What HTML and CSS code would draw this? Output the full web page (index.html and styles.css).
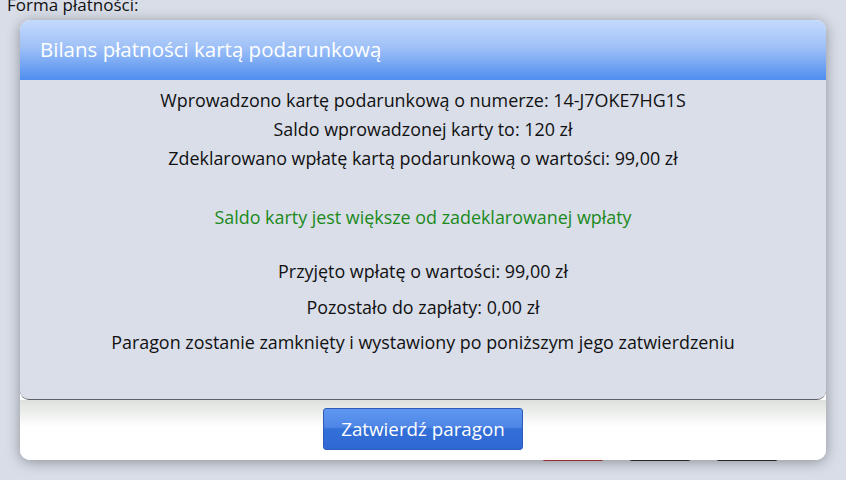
FILE: index.html
```html
<!DOCTYPE html>
<html lang="pl">
<head>
    <meta charset="UTF-8">
    <meta name="viewport" content="width=device-width, initial-scale=1.0">
    <title>Bilans płatności kartą podarunkową</title>
    <link rel="stylesheet" href="styles.css">
</head>
<body>
    <div class="page">
        <div class="label">Forma płatności:</div>
        <div class="pay-buttons">
            <span class="pay pay-red"></span>
            <span class="pay pay-dark"></span>
            <span class="pay pay-dark"></span>
        </div>
    </div>

    <!-- Modal -->
    <div class="modal">
        <div class="modal-header">Bilans płatności kartą podarunkową</div>
        <div class="modal-body">
            <p class="line">Wprowadzono kartę podarunkową o numerze: 14-J7OKE7HG1S</p>
            <p class="line">Saldo wprowadzonej karty to: 120 zł</p>
            <p class="line">Zdeklarowano wpłatę kartą podarunkową o wartości: 99,00 zł</p>
            <p class="line ok">Saldo karty jest większe od zadeklarowanej wpłaty</p>
            <p class="line summary first">Przyjęto wpłatę o wartości: 99,00 zł</p>
            <p class="line summary">Pozostało do zapłaty: 0,00 zł</p>
            <p class="line summary">Paragon zostanie zamknięty i wystawiony po poniższym jego zatwierdzeniu</p>
        </div>
        <div class="modal-footer">
            <button class="confirm">Zatwierdź paragon</button>
        </div>
    </div>
</body>
</html>
```

FILE: styles.css
```css
/* General styles */
body {
    margin: 0;
    padding: 0;
    background-color: #d8dde8;
    font-family: "Open Sans", "Noto Sans", sans-serif;
    color: #111;
    height: 480px;
    overflow: hidden;
}

.page {
    padding: 0 7px;
}

.label {
    font-size: 17px;
    line-height: 20px;
    margin-top: -5px;
}

.pay-buttons {
    display: flex;
    gap: 25px;
    margin-top: 436px;
    margin-left: 535px;
}

.pay {
    width: 62px;
    height: 10px;
    border-radius: 3px;
}

.pay-red {
    background-color: #b83a36;
}

.pay-dark {
    background-color: #333;
}

/* Modal */
.modal {
    position: absolute;
    left: 20px;
    top: 20px;
    width: 806px;
    height: 440px;
    border-radius: 10px;
    overflow: hidden;
    background-color: #fff;
    box-shadow: 0 2px 14px rgba(0, 0, 0, 0.35);
    display: flex;
    flex-direction: column;
}

.modal-header {
    height: 60px;
    padding-left: 20px;
    line-height: 58px;
    font-size: 20.5px;
    color: #fff;
    background: linear-gradient(to bottom, #c4dafd 0%, #9fc1f7 45%, #4f8ef0 100%);
}

.modal-body {
    height: 320px;
    box-sizing: border-box;
    padding-top: 6px;
    background-color: #d9dee9;
    border-bottom: 1px solid #5d6166;
    border-radius: 0 0 9px 9px;
    text-align: center;
}

.line {
    margin: 0;
    font-size: 17.9px;
    line-height: 29px;
}

.ok {
    color: #1a8a1a;
    margin-top: 30px;
}

.summary {
    margin-top: 6.5px;
}

.summary.first {
    margin-top: 25px;
}

.modal-footer {
    flex: 1;
    display: flex;
    justify-content: center;
    align-items: flex-start;
    padding-top: 8px;
    background: linear-gradient(to bottom, #dde1dd 0%, #ffffff 45%, #ffffff 100%);
}

.confirm {
    width: 200px;
    height: 42px;
    border: 1px solid #2d5cb8;
    border-radius: 3px;
    background: linear-gradient(to bottom, #5f98f2 0%, #4f86e6 45%, #336fd8 50%, #2f69d3 100%);
    color: #fff;
    font-family: "Open Sans", "Noto Sans", sans-serif;
    font-size: 18.8px;
    cursor: pointer;
}
```
